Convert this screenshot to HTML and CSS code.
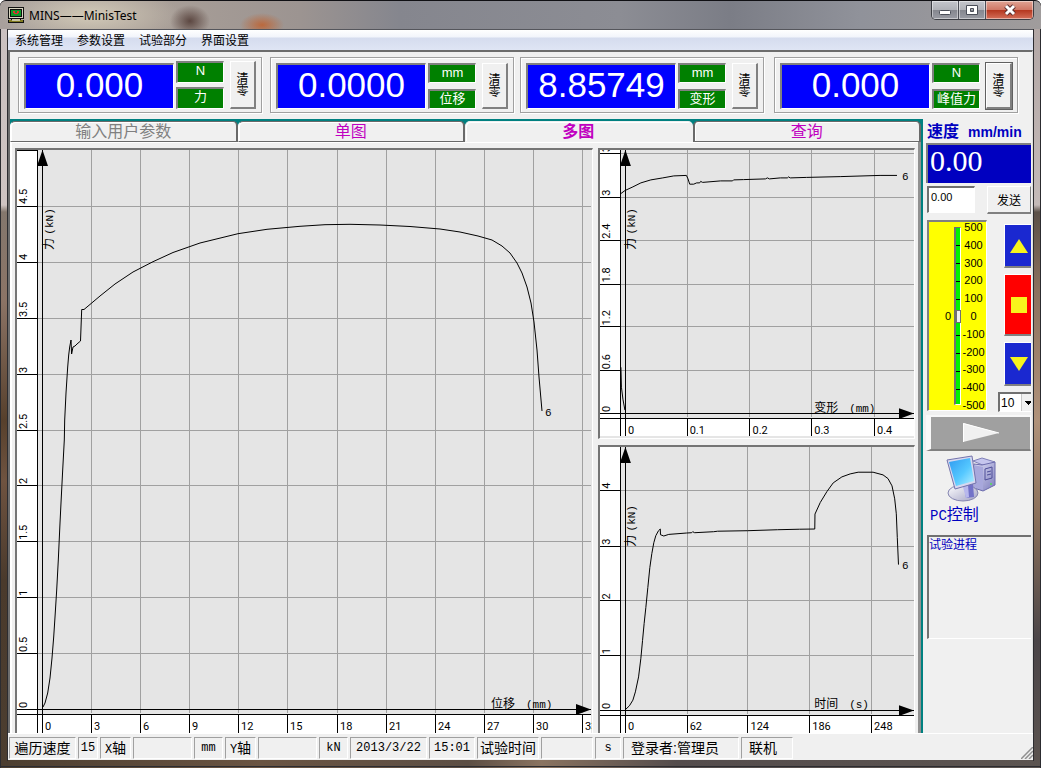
FILE: index.html
```html
<!DOCTYPE html>
<html lang="zh-CN">
<head>
<meta charset="utf-8">
<title>MINS——MinisTest</title>
<link rel="stylesheet" href="styles.css">
</head>
<body>
<div class="window">
  <header class="titlebar">
    <svg class="app-icon" width="16" height="16" viewBox="0 0 16 16" shape-rendering="crispEdges">
      <path fill="#111" d="M0 0h16v12h-3v1h3v3H0v-3h3v-1H0z"/>
      <path fill="#d8d4c0" d="M1 1h14v10H1z"/>
      <path fill="#111" d="M2 2h12v8H2z"/>
      <path fill="#0c9a28" d="M3 3h10v6H3z"/>
      <path fill="#e03030" d="M5 4h2v2H5zM9 4h2v2H9zM6 6h4v1H6z"/>
      <path fill="#807a20" d="M1 13h14v2H1z"/>
      <path fill="#c8c4a0" d="M4 12h8v2H4z"/>
    </svg>
    <h1 class="caption">MINS——MinisTest</h1>
    <div class="window-buttons">
      <button class="wb" aria-label="最小化"><svg width="14" height="12" viewBox="0 0 14 12"><rect x="1.500" y="6.500" width="11" height="4" rx="1" fill="#fff" stroke="#4a4e58"/></svg></button>
      <button class="wb" aria-label="最大化"><svg width="14" height="12" viewBox="0 0 14 12"><path fill="#fff" fill-rule="evenodd" stroke="#4a4e58" d="M1.500 1.500h11v9h-11zM5.500 4.500v3h3v-3z"/></svg></button>
      <button class="wb wb-close" aria-label="关闭"><svg width="14" height="12" viewBox="0 0 14 12"><path d="M3 2l8 8M11 2l-8 8" stroke="#5a3030" stroke-width="5"/><path d="M3 2l8 8M11 2l-8 8" stroke="#fff" stroke-width="3"/></svg></button>
    </div>
  </header>

  <nav class="menu">
    <button class="menu-item">系统管理</button>
    <button class="menu-item">参数设置</button>
    <button class="menu-item">试验部分</button>
    <button class="menu-item">界面设置</button>
  </nav>

  <main class="client">
    <section class="meters">
      <div class="meter meter-tall">
        <output class="reading">0.000</output>
        <div class="units"><span class="unit">N</span><span class="unit">力</span></div>
        <button class="zero">清<br>零</button>
      </div>
      <div class="meter">
        <output class="reading">0.0000</output>
        <div class="units"><span class="unit">mm</span><span class="unit">位移</span></div>
        <button class="zero">清<br>零</button>
      </div>
      <div class="meter">
        <output class="reading">8.85749</output>
        <div class="units"><span class="unit">mm</span><span class="unit">变形</span></div>
        <button class="zero">清<br>零</button>
      </div>
      <div class="meter">
        <output class="reading">0.000</output>
        <div class="units"><span class="unit">N</span><span class="unit">峰值力</span></div>
        <button class="zero zero-default">清<br>零</button>
      </div>
    </section>

    <div class="work">
      <section class="book">
        <div class="tabs" role="tablist">
          <button class="tab tab-off" role="tab">输入用户参数</button>
          <button class="tab" role="tab">单图</button>
          <button class="tab tab-active" role="tab" aria-selected="true">多图</button>
          <button class="tab" role="tab">查询</button>
        </div>
        <div class="page">
          <div class="chart chart-main">
            <svg viewBox="17 150 574 583" preserveAspectRatio="xMinYMin meet">
              <g shape-rendering="crispEdges">
                <path fill="#fff" d="M17 150h20v583H17zM17 714h574v19H17z"/>
                <path class="grid" d="M91.500 150V713M140.500 150V713M189.500 150V713M238.500 150V713M287.500 150V713M337.500 150V713M386.500 150V713M435.500 150V713M484.500 150V713M533.500 150V713M582.500 150V713M38 206.500H591M38 262.500H591M38 318.500H591M38 374.500H591M38 430.500H591M38 485.500H591M38 541.500H591M38 597.500H591M38 653.500H591"/>
                <path class="axis" d="M17 150.500H38M37.500 150V733M42.500 150V733M17 709.500H591M17 714.500H591M17 206.500H37M17 262.500H37M17 318.500H37M17 374.500H37M17 430.500H37M17 485.500H37M17 541.500H37M17 597.500H37M17 653.500H37M91.500 714V733M140.500 714V733M189.500 714V733M238.500 714V733M287.500 714V733M337.500 714V733M386.500 714V733M435.500 714V733M484.500 714V733M533.500 714V733M582.500 714V733"/>
              </g>
              <path d="M42.500 150L48 166H37zM591 709.500L576 704V715z"/>
              <polyline class="curve" points="43,707 45,703 47.700,693 50,678 52,658 53.700,637 55,617 56.700,590 58.300,560 60,523 61.300,497 62.700,470 64.300,440 64.700,420 66,393 67.700,367 68.700,355 69.700,347 71,340 71.600,354 73,347 75,346 77,344 80.500,341 81.700,309.500 84,309.500 100,296 115,284 133,272 153,261.700 173,252.500 200,243 238,233.700 267,229.300 300,226.300 325,224.700 350,224.300 380,225 410,226.500 440,229 460,232 478,236 492,240 502,246 510,253 517,263 522,273 527,287 531,303 534,322 537,350 539,377 542,411"/>
              <g class="num">
                <text x="45" y="730">0</text><text x="94" y="730">3</text><text x="143" y="730">6</text><text x="192" y="730">9</text><text x="241" y="730">12</text><text x="290" y="730">15</text><text x="340" y="730">18</text><text x="389" y="730">21</text><text x="438" y="730">24</text><text x="487" y="730">27</text><text x="536" y="730">30</text><text x="585" y="730">33</text>
                <text transform="translate(27 204) rotate(-90)">4.5</text><text transform="translate(27 260) rotate(-90)">4</text><text transform="translate(27 317) rotate(-90)">3.5</text><text transform="translate(27 373) rotate(-90)">3</text><text transform="translate(27 429) rotate(-90)">2.5</text><text transform="translate(27 484) rotate(-90)">2</text><text transform="translate(27 540) rotate(-90)">1.5</text><text transform="translate(27 596) rotate(-90)">1</text><text transform="translate(27 652) rotate(-90)">0.5</text><text transform="translate(27 708) rotate(-90)">0</text>
              </g>
              <text class="label" transform="translate(53 250) rotate(-90)">力 <tspan class="mono">(kN)</tspan></text>
              <text class="label" x="491" y="708">位移 <tspan class="mono" x="526">(mm)</tspan></text>
              <text class="mono" x="545" y="416">6</text>
            </svg>
          </div>
          <div class="side-charts">
            <div class="chart chart-top">
              <svg viewBox="599 150 315 287" preserveAspectRatio="xMinYMin meet">
                <g shape-rendering="crispEdges">
                  <path fill="#fff" d="M599 150h20v287h-20zM599 419h315v18H599z"/>
                  <path class="grid" d="M686.500 150V418M749.500 150V418M811.500 150V418M874.500 150V418M620 153.500H914M620 197.500H914M620 240.500H914M620 284.500H914M620 327.500H914M620 371.500H914"/>
                  <path class="axis" d="M619.500 150V437M624.500 150V437M599 414.500H914M599 419.500H914M599 153.500H619M599 197.500H619M599 240.500H619M599 284.500H619M599 327.500H619M599 371.500H619M686.500 419V437M749.500 419V437M811.500 419V437M874.500 419V437"/>
                </g>
                <path d="M624.500 150L630 166H619zM914 414.500L899 409V420z"/>
                <polyline class="curve" points="620,193.700 624,190.700 632,187 640,183 650,180 662,178 673,176 685.700,175.500 687.300,179 689,184.300 693,184.300 696,183 699,183 700,181.500 702,182.500 720,181 732,181 733,180 743,179.700 765,179 767,178 769,179 780,178 787,178 788,177 790,178 806,177.500 840,176.700 880,175.500 897,175.500"/>
                <polyline class="curve" points="620,368 620.500,388 622,400 624,411"/>
                <g class="num">
                  <text x="627" y="435">0</text><text x="689" y="435">0.1</text><text x="752" y="435">0.2</text><text x="814" y="435">0.3</text><text x="877" y="435">0.4</text>
                  <text transform="translate(609 152) rotate(-90)">3.6</text><text transform="translate(609 196) rotate(-90)">3</text><text transform="translate(609 239) rotate(-90)">2.4</text><text transform="translate(609 283) rotate(-90)">1.8</text><text transform="translate(609 326) rotate(-90)">1.2</text><text transform="translate(609 370) rotate(-90)">0.6</text><text transform="translate(609 413) rotate(-90)">0</text>
                </g>
                <text class="label" transform="translate(634 250) rotate(-90)">力 <tspan class="mono">(kN)</tspan></text>
                <text class="label" x="814" y="413">变形 <tspan class="mono" x="849">(mm)</tspan></text>
                <text class="mono" x="902" y="180">6</text>
              </svg>
            </div>
            <div class="chart chart-bottom">
              <svg viewBox="599 446 315 287" preserveAspectRatio="xMinYMin meet">
                <g shape-rendering="crispEdges">
                  <path fill="#fff" d="M599 446h20v287h-20zM599 715h315v18H599z"/>
                  <path class="grid" d="M686.500 446V714M747.500 446V714M809.500 446V714M871.500 446V714M620 489.500H914M620 545.500H914M620 600.500H914M620 655.500H914"/>
                  <path class="axis" d="M619.500 446V733M624.500 446V733M599 710.500H914M599 715.500H914M599 489.500H619M599 545.500H619M599 600.500H619M599 655.500H619M686.500 715V733M747.500 715V733M809.500 715V733M871.500 715V733"/>
                </g>
                <path d="M624.500 446L630 462H619zM914 710.500L899 705V716z"/>
                <polyline class="curve" points="624.500,709.500 628.500,705.700 632,700 634.500,691.700 637.700,676.700 640,658 641.700,640 643.300,623 645,607 647,587 649,567 651,553 653,542 655,535 657.700,530 659.500,528.300 659.700,534 663,535.300 668,533.700 686,532.300 691,532 692,531 694,532 713,531 717,530.500 747,530 777,529 799,528.500 814.500,528.300 814.700,513.300 820,501.700 826.700,490.700 833,482 841.700,476 850,473 858,471.300 873,471.300 883,474 888,477.700 892,485 894.700,498 896.300,513 897.300,536.700 898.500,564"/>
                <g class="num">
                  <text x="627" y="730">0</text><text x="689" y="730">62</text><text x="750" y="730">124</text><text x="812" y="730">186</text><text x="874" y="730">248</text>
                  <text transform="translate(609 488) rotate(-90)">4</text><text transform="translate(609 544) rotate(-90)">3</text><text transform="translate(609 599) rotate(-90)">2</text><text transform="translate(609 654) rotate(-90)">1</text><text transform="translate(609 709) rotate(-90)">0</text>
                </g>
                <text class="label" transform="translate(634 546) rotate(-90)">力 <tspan class="mono">(kN)</tspan></text>
                <text class="label" x="814" y="708">时间 <tspan class="mono" x="849">(s)</tspan></text>
                <text class="mono" x="902" y="568">6</text>
              </svg>
            </div>
          </div>
        </div>
      </section>

      <aside class="sidebar">
        <div class="speed-title"><span class="speed-name">速度</span><span class="speed-unit">mm/min</span></div>
        <output class="speed-value">0.00</output>
        <div class="send-row">
          <input class="speed-input" type="text" value="0.00" aria-label="速度设定">
          <button class="send">发送</button>
        </div>
        <div class="drive">
          <div class="scale">
            <span class="scale-now">0</span>
            <input class="slider" type="range" min="-500" max="500" value="0" aria-label="速度调节">
            <div class="scale-marks">
              <span>500</span><span>400</span><span>300</span><span>200</span><span>100</span><span>0</span><span>-100</span><span>-200</span><span>-300</span><span>-400</span><span>-500</span>
            </div>
          </div>
          <div class="drive-buttons">
            <button class="drive-btn" aria-label="上升"><svg width="20" height="20" viewBox="0 0 20 20"><path fill="#f8f41c" d="M10 3l9 14H1z"/></svg></button>
            <button class="drive-btn drive-stop" aria-label="停止"><svg width="20" height="20" viewBox="0 0 20 20"><path fill="#f8f41c" d="M2 2h16v16H2z"/></svg></button>
            <button class="drive-btn" aria-label="下降"><svg width="20" height="20" viewBox="0 0 20 20"><path fill="#f8f41c" d="M1 3h18l-9 14z"/></svg></button>
            <select class="step" aria-label="步进"><option>10</option></select>
          </div>
        </div>
        <button class="play" aria-label="开始"><svg width="36" height="20" viewBox="0 0 36 20"><path fill="#f0f0f0" d="M0 0l36 10L0 19z"/><path fill="none" stroke="#fff" d="M.5 19V.5L36 10"/></svg></button>
        <button class="pc">
          <svg width="50" height="48" viewBox="0 0 50 48">
            <defs>
              <linearGradient id="scr" x1="0" y1="0" x2="1" y2="1"><stop offset="0" stop-color="#2f9af0"/><stop offset=".55" stop-color="#55c8ff"/><stop offset="1" stop-color="#b5f0ff"/></linearGradient>
              <linearGradient id="box" x1="0" y1="0" x2="1" y2="1"><stop offset="0" stop-color="#e2e2f8"/><stop offset="1" stop-color="#7c7cbc"/></linearGradient>
              <linearGradient id="foot" x1="0" y1="0" x2="1" y2="1"><stop offset="0" stop-color="#ffffff"/><stop offset="1" stop-color="#a2a2c4"/></linearGradient>
            </defs>
            <path fill="#c6c6ee" stroke="#8080b8" d="M27 6l9-3 13 4-10 4z"/>
            <path fill="url(#box)" stroke="#6c6cae" d="M36 10l13-3v23l-12 6-9-3V9z"/>
            <path fill="#a8a8dc" d="M28 10l9 2v23l-9-3z"/>
            <path fill="none" stroke="#4e4e98" d="M39 14l7-2v11l-7 2zM41 17l4-1M41 20l4-1"/>
            <circle cx="45" cy="29" r="1" fill="#50e050"/>
            <ellipse cx="17" cy="38" rx="15" ry="8" fill="url(#foot)" stroke="#8484b0"/>
            <path fill="#7272c8" d="M18 31l9-3 1 14-8 1z"/>
            <path fill="#b8b8ec" d="M17 32l5-2 1 12-3 1z"/>
            <path fill="#d8d8f0" stroke="#7474ac" d="M1 5l25-4 4 27-21 6z"/>
            <path fill="url(#scr)" d="M3 7l21-4 4 23-18 5z"/>
          </svg>
          <span class="pc-text"><span class="pc-latin">PC</span>控制</span>
        </button>
        <div class="progress">试验进程</div>
      </aside>
    </div>
  </main>

  <footer class="status">
    <span class="cell w-name">遍历速度</span>
    <span class="cell w-num mono">15</span>
    <span class="cell w-axis"><span class="mono">X</span>轴</span>
    <span class="cell w-blank"></span>
    <span class="cell w-unit mono">mm</span>
    <span class="cell w-axis"><span class="mono">Y</span>轴</span>
    <span class="cell w-blank"></span>
    <span class="cell w-unit mono">kN</span>
    <span class="cell w-date mono">2013/3/22</span>
    <span class="cell w-clock mono">15:01</span>
    <span class="cell w-time">试验时间</span>
    <span class="cell w-gap"></span>
    <span class="cell w-sec mono">s</span>
    <span class="cell w-user">登录者:管理员</span>
    <span class="cell w-link">联机</span>
    <svg class="grip" width="12" height="12" viewBox="0 0 12 12"><path stroke="#909090" stroke-width="1.500" d="M0 12L12 0M4 12l8-8M8 12l4-4"/></svg>
  </footer>
</div>
</body>
</html>
```

FILE: styles.css
```css
* {
  box-sizing: border-box;
}

body {
  margin: 0;
  font-family: "Liberation Sans", "Noto Sans CJK SC", sans-serif;
  font-size: 12px;
  color: #000;
}

button {
  font: inherit;
  color: inherit;
  padding: 0;
  border: 0;
  background: none;
}

svg {
  display: block;
}

.window {
  display: flex;
  flex-direction: column;
  height: 100vh;
  padding: 0 8px 8px;
  border-radius: 6px 6px 0 0;
  background:
    linear-gradient(#2c2c30, #2c2c30) 7px 29px / 1px calc(100% - 36px) no-repeat,
    linear-gradient(#2c2c30, #2c2c30) 0 0 / 1px 100% no-repeat,
    linear-gradient(#2c2c30, #2c2c30) calc(100% - 7px) 29px / 1px calc(100% - 36px) no-repeat,
    linear-gradient(#2c2c30, #2c2c30) 100% 0 / 1px 100% no-repeat,
    linear-gradient(#2c2c30, #2c2c30) 0 calc(100% - 1px) / 100% 1px no-repeat,
    linear-gradient(#c9c0c0 0, #cfc4c2 205px, #84776d 212px, #8c7466 300px, #57402c 420px, #6f5340 480px, #4a3a2c 580px, #4c3e30 100%) 0 0 / 8px 100% no-repeat,
    linear-gradient(#b0a4a2 0, #c4bab8 205px, #5b5048 212px, #8c715e 290px, #b0927a 420px, #8a6f5a 520px, #4b4548 640px, #5c5450 100%) 100% 0 / 8px 100% no-repeat,
    linear-gradient(90deg, #4c3e30, #6a5442 25%, #5c4e44 45%, #8a7360 52%, #544c4c 65%, #5c5450) #333;
}

.titlebar {
  display: flex;
  align-items: center;
  flex: none;
  height: 29px;
  margin: 0 -8px;
  padding: 0 7px 0 8px;
  border-top: 1px solid #101014;
  border-radius: 6px 6px 0 0;
  background:
    radial-gradient(ellipse at 190px 22px, rgba(92, 66, 58, .9) 0, rgba(92, 66, 58, 0) 18px),
    radial-gradient(20px 16px at 190px 20px, rgba(84, 62, 56, .9) 0, rgba(84, 62, 56, 0) 100%),
    radial-gradient(22px 12px at 262px 24px, rgba(190, 100, 52, .9) 0, rgba(190, 100, 52, 0) 100%),
    radial-gradient(90px 30px at 90px 14px, rgba(214, 206, 186, .9) 0, rgba(214, 206, 186, 0) 100%),
    linear-gradient(90deg, #a8a09c, #a99f98 150px, #9c9491 300px, #85868e 400px, #8c8d94 620px, #7b7d86 730px, #90929a 860px, #a09c9c 100%);
}

.app-icon {
  flex: none;
}

.caption {
  flex: 1;
  margin: 0 0 0 5px;
  font: 12px "Noto Sans", "Noto Sans CJK SC", sans-serif;
}

.window-buttons {
  display: flex;
  align-self: flex-start;
  height: 19px;
  border: 1px solid #3c3e44;
  border-top: 0;
  border-radius: 0 0 5px 5px;
  overflow: hidden;
}

.wb {
  display: flex;
  align-items: center;
  justify-content: center;
  width: 27px;
  border-right: 1px solid #4c4e56;
  box-shadow: inset 0 0 0 1px rgba(255, 255, 255, .45);
  background: linear-gradient(#c4c6cc, #b0b2b8 48%, #85878f 52%, #9a9ca4);
}

.wb-close {
  width: 47px;
  border-right: 0;
  background: linear-gradient(#e0a494, #d07866 48%, #b53820 52%, #d4705a);
}

.menu {
  display: flex;
  gap: 14px;
  flex: none;
  height: 21px;
  padding: 0 7px 2px;
  border-top: 1px solid #55565c;
  background: linear-gradient(#fff 0, #f2f5fb 7px, #d5dcee 8px, #dfe5f4 100%);
}

.menu-item {
  white-space: nowrap;
}

.client {
  display: flex;
  flex-direction: column;
  flex: 1;
  min-height: 0;
  border: solid #6c6c6c;
  border-width: 2px 1px 0 2px;
  border-right-color: #e0e0e0;
  background: #f0f0f0;
}

.meters {
  display: grid;
  grid-template-columns: 252fr 250fr 254fr 244fr;
  flex: none;
  height: 67px;
  padding: 5px 14px 6px 8px;
}

.meter {
  display: flex;
  align-items: flex-end;
  width: 244px;
  padding: 0 4px 3px 5px;
  border: 1px solid #a0a0a0;
  box-shadow: inset 1px 1px #fff, 1px 1px #fff;
}

.reading {
  width: 150px;
  height: 46px;
  border: 2px solid #808080;
  border-right: 1px solid #fff;
  border-bottom: 1px solid #fff;
  background: #00f;
  color: #fff;
  font-size: 35px;
  line-height: 40px;
  text-align: center;
}

.units {
  display: grid;
  gap: 6px;
  width: 48px;
  margin: 0 6px 0 2px;
}

.unit {
  height: 20px;
  border: 2px solid #808080;
  border-right: 1px solid #fff;
  border-bottom: 1px solid #fff;
  background: #008000;
  color: #fff;
  font-size: 13px;
  line-height: 16px;
  text-align: center;
}

.zero {
  width: 26px;
  height: 46px;
  border: 1px solid #fff;
  border-right: 2px solid #808080;
  border-bottom: 2px solid #808080;
  background: #f0f0f0;
  font-size: 12px;
  line-height: 12px;
}

.zero-default {
  outline: 1px solid #606060;
}

.meter-tall .units {
  gap: 4px;
}

.meter-tall .unit {
  height: 22px;
}

.meter-tall .zero {
  height: 48px;
}

.work {
  display: flex;
  flex: 1;
  min-height: 0;
}

.book {
  display: flex;
  flex-direction: column;
  flex: 1;
  min-width: 0;
  border-top: 2px solid #008080;
  border-right: 2px solid #008080;
}

.tabs {
  display: flex;
  flex: none;
  height: 21px;
  background: #008080;
}

.tab {
  flex: 1 0 0;
  border: 1px solid #696969;
  border-right-width: 2px;
  border-left-color: #fff;
  border-radius: 5px 5px 0 0;
  background: #f0f0f0;
  box-shadow: inset 1px 1px #fff;
  color: #c000c0;
  font-size: 16px;
  line-height: 16px;
}

.tab-off {
  color: #808080;
}

.tab-active {
  border-color: #f0f0f0;
  font-weight: bold;
  line-height: 18px;
}

.tab-active + .tab {
  border-left: 2px solid #696969;
}

.page {
  display: flex;
  gap: 5px;
  flex: 1;
  min-height: 0;
  padding: 6px 3px 0 5px;
  border-right: 3px solid #909090;
  box-shadow: inset 2px 1px #fff;
}

.chart {
  min-width: 0;
  min-height: 0;
  border: 2px solid #757575;
  border-right: 1px solid #fff;
  border-bottom: 0;
  background: #e5e5e5;
}

.chart svg {
  width: 100%;
  height: 100%;
}

.chart-main {
  flex: 577 1 0;
}

.side-charts {
  display: flex;
  flex-direction: column;
  gap: 6px;
  flex: 318 1 0;
  min-width: 0;
}

.chart-top {
  flex: 290 1 0;
  border-bottom: 1px solid #fff;
}

.chart-bottom {
  flex: 289 1 0;
}

.grid {
  fill: none;
  stroke: #a0a0a0;
}

.axis {
  fill: none;
  stroke: #000;
}

.curve {
  fill: none;
  stroke: #000;
}

.num {
  font-family: "Liberation Sans Narrow", Roboto, sans-serif;
  font-size: 11px;
}

.label {
  font-size: 12px;
}

.mono {
  font-family: "Liberation Mono", "Noto Sans CJK SC", monospace;
}

text.mono,
tspan.mono {
  font-size: 11px;
}

.sidebar {
  display: flex;
  flex-direction: column;
  flex: none;
  width: 109px;
  padding: 0 1px 0 3px;
}

.speed-title {
  display: flex;
  align-items: baseline;
  gap: 9px;
  height: 24px;
  padding-left: 1px;
  color: #0000c0;
  font-weight: bold;
  line-height: 26px;
}

.speed-name {
  font-size: 16px;
}

.speed-unit {
  font-size: 14px;
}

.speed-value {
  height: 40px;
  padding-left: 2px;
  border: solid #808080;
  border-width: 2px 0 0 2px;
  background: #0000c0;
  color: #fff;
  font: 30px/32px "Liberation Serif", serif;
}

.send-row {
  display: flex;
  justify-content: space-between;
  height: 28px;
  margin: 3px 0 6px 1px;
}

.speed-input {
  width: 48px;
  height: 27px;
  padding: 0 2px 6px;
  border: 2px solid #707070;
  border-right: 1px solid #fff;
  border-bottom: 1px solid #fff;
  background: #fff;
  font: 11px "Liberation Sans", sans-serif;
}

.send {
  width: 44px;
  border: 1px solid #fff;
  border-right: 1px solid #808080;
  border-bottom: 2px solid #808080;
  background: #f0f0f0;
}

.drive {
  display: flex;
  justify-content: space-between;
  height: 195px;
  padding-left: 1px;
}

.scale {
  display: flex;
  justify-content: flex-end;
  align-items: center;
  width: 60px;
  height: 191px;
  border: 2px solid #808080;
  border-right: 1px solid #fff;
  border-bottom: 1px solid #fff;
  background: #ff0;
  font-size: 11px;
}

.scale-now {
  margin-right: 3px;
}

.slider {
  appearance: none;
  writing-mode: vertical-lr;
  direction: rtl;
  width: 7px;
  height: 178px;
  margin: 0;
  border: 1px solid #fff;
  border-left: 2px solid #707070;
  border-top-color: #707070;
  background: linear-gradient(#000 0 1px, #00f000 1px) 0 17px / 100% 18px;
}

.slider::-webkit-slider-thumb {
  appearance: none;
  width: 5px;
  height: 13px;
  border: 1px solid #707070;
  background: #f0f0f0;
}

.scale-marks {
  display: flex;
  flex-direction: column;
  justify-content: space-between;
  width: 25px;
  height: 190px;
  line-height: 12px;
  text-align: center;
}

.drive-buttons {
  display: flex;
  flex-direction: column;
  align-items: flex-end;
  gap: 6px;
  padding-top: 4px;
}

.drive-btn {
  display: flex;
  align-items: center;
  justify-content: center;
  width: 27px;
  height: 44px;
  padding-left: 1px;
  border: 1px solid #fff;
  border-right: 0;
  border-bottom: 2px solid #808080;
  background: #1a28d0;
  background-clip: padding-box;
}

.drive-stop {
  height: 62px;
  background-color: #f00;
}

.step {
  appearance: none;
  width: 33px;
  height: 20px;
  padding: 0 0 0 1px;
  border: 2px solid #707070;
  border-right: 0;
  border-bottom: 1px solid #fff;
  border-radius: 0;
  background:
    linear-gradient(#000, #000) 25px 7px / 7px 1px no-repeat,
    linear-gradient(#000, #000) 26px 8px / 5px 1px no-repeat,
    linear-gradient(#000, #000) 27px 9px / 3px 1px no-repeat,
    linear-gradient(#000, #000) 28px 10px / 1px 1px no-repeat,
    linear-gradient(90deg, #fff 21px, #c8c8c8 21px 22px, #f0f0f0 22px);
  font: 12px "Liberation Sans", sans-serif;
}

.play {
  display: flex;
  align-items: center;
  justify-content: center;
  height: 36px;
  border: solid #f8f8f8;
  border-width: 2px 1px 2px 5px;
  border-bottom-color: #808080;
  background: #a0a0a0;
}

.pc {
  display: flex;
  flex-direction: column;
  align-items: flex-start;
  height: 74px;
  margin-top: 4px;
  padding-left: 4px;
  color: #0000c0;
}

.pc svg {
  margin-left: 16px;
}

.pc-text {
  font-size: 16px;
  line-height: 24px;
}

.pc-latin {
  font-family: "Liberation Mono", monospace;
  font-size: 14px;
}

.progress {
  height: 104px;
  margin: 6px 0 0 1px;
  border: 2px solid #707070;
  border-right: 0;
  border-bottom: 1px solid #fff;
  color: #0000c0;
  line-height: 16px;
}

.status {
  display: flex;
  align-items: stretch;
  flex: none;
  gap: 2px;
  height: 27px;
  padding: 3px 0 1px 1px;
  border-top: 1px solid #fff;
  background: #f0f0f0;
  font-size: 14px;
  line-height: 21px;
  white-space: nowrap;
}

.cell {
  flex: none;
  border: 1px solid #a0a0a0;
  border-right-color: #fff;
  border-bottom-color: #fff;
  text-align: center;
}

.status .mono {
  font-size: 12px;
}

.w-name { width: 67px; }
.w-num { width: 20px; }
.w-axis { width: 31px; }
.w-blank { width: 59px; }
.w-unit { width: 29px; }
.w-date { width: 77px; }
.w-clock { width: 46px; }
.w-time { width: 62px; }
.w-gap { width: 52px; }
.w-sec { width: 26px; }
.w-user { width: 116px; padding-right: 12px; }
.w-link { width: 52px; padding-right: 8px; }

.grip {
  align-self: flex-end;
  flex: none;
  margin-left: auto;
}
```
